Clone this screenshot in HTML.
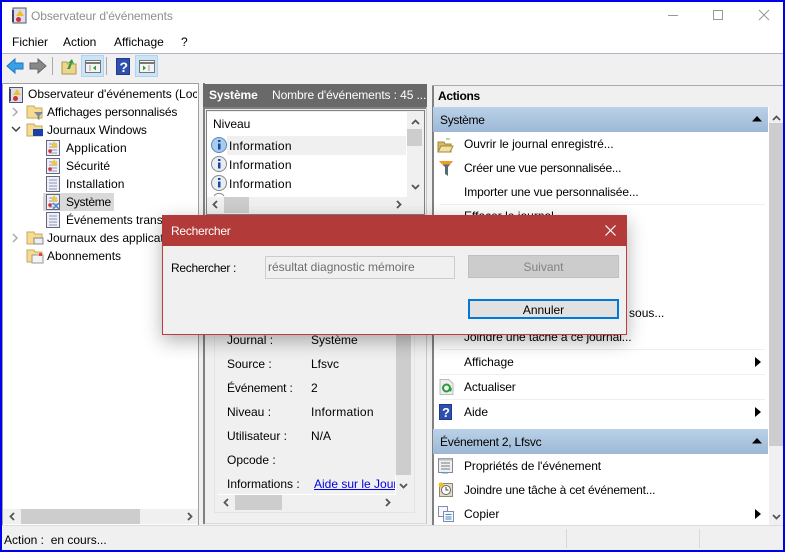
<!DOCTYPE html>
<html><head><meta charset="utf-8"><style>
html,body{margin:0;padding:0}
body{width:785px;height:552px;overflow:hidden;position:relative;background:#f0f0f0;font:12px/16px "Liberation Sans",sans-serif;color:#000}
.a,.t{position:absolute}
.t{white-space:nowrap}
svg{position:absolute;overflow:visible}
.sep{position:absolute;height:1px;background:#eee;left:440px;width:325px}
.band{position:absolute;left:433px;width:335px;height:25px;background:linear-gradient(#bad2e8,#9db8d6)}
</style></head><body>
<div class="a" style="left:0;top:0;width:781px;height:548px;border:2px solid #0000f0;background:#fff"></div>
<div class="a" style="left:2px;top:54px;width:781px;height:496px;background:#f0f0f0"></div>
<div class="a" style="left:2px;top:53px;width:781px;height:1px;background:#b4b4c4"></div>
<div class="a" style="left:2px;top:2px;width:781px;height:51px;background:#fff"></div>

<!-- Title -->
<svg style="left:11px;top:7px" width="18" height="18"><rect x="2" y="1" width="13" height="15" fill="#dde" stroke="#556"/><path d="M2 3v12" stroke="#446" stroke-width="2"/><path d="M9 3l4 6H5z" fill="#ecc02c"/><circle cx="7.500" cy="12.500" r="2.500" fill="#c33"/></svg>
<div class="t" style="left:31px;top:8px;color:#8f8f8f;font-size:12px;letter-spacing:-.08px">Observateur d'événements</div>
<div class="a" style="left:668px;top:15px;width:10px;height:1px;background:#999"></div>
<div class="a" style="left:713px;top:10px;width:8px;height:8px;border:1px solid #999"></div>
<svg style="left:759px;top:10px" width="10" height="10"><path d="M0 0l10 10M10 0L0 10" stroke="#999" fill="none"/></svg>

<!-- Menu -->
<div class="t" style="left:12px;top:34px">Fichier</div>
<div class="t" style="left:63px;top:34px">Action</div>
<div class="t" style="left:114px;top:34px">Affichage</div>
<div class="t" style="left:181px;top:34px">?</div>

<!-- Toolbar -->
<svg style="left:7px;top:59px" width="17" height="14"><path d="M0 7l8-7v4h8v6H8v4z" fill="#3aa0e8" stroke="#1878c0"/></svg>
<svg style="left:30px;top:59px" width="17" height="14"><path d="M16 7L8 0v4H0v6h8v4z" fill="#888" stroke="#666"/></svg>
<div class="a" style="left:52px;top:57px;width:1px;height:18px;background:#aaa"></div>
<svg style="left:61px;top:58px" width="16" height="17"><path d="M1 4h5l1 2h8v10H1z" fill="#ecd58e" stroke="#b09848"/><path d="M6 11l3-6-2 0 4-4 2 5-2-1-2 6z" fill="#3a9a3a"/></svg>
<div class="a" style="left:81px;top:55px;width:21px;height:20px;background:#cce4f7;border:1px solid #b0d4ee"></div>
<svg style="left:85px;top:60px" width="16" height="13"><rect x=".5" y=".5" width="15" height="12" fill="#f4f4f4" stroke="#777"/><path d="M1 3h14" stroke="#777" stroke-width="2"/><path d="M5 5v6" stroke="#999"/><path d="M11 5.500v5l-3-2.500z" fill="#2aa02a"/></svg>
<div class="a" style="left:106px;top:57px;width:1px;height:18px;background:#aaa"></div>
<svg style="left:116px;top:58px" width="14" height="17"><rect x=".5" y=".5" width="13" height="16" fill="#2f4fb0" stroke="#223a88"/><text x="3.500" y="14" font-family="Liberation Sans" font-size="14" font-weight="bold" fill="#fff">?</text></svg>
<div class="a" style="left:135px;top:55px;width:21px;height:20px;background:#cce4f7;border:1px solid #b0d4ee"></div>
<svg style="left:139px;top:60px" width="16" height="13"><rect x=".5" y=".5" width="15" height="12" fill="#f4f4f4" stroke="#777"/><path d="M1 3h14" stroke="#777" stroke-width="2"/><path d="M10 5v6" stroke="#999"/><path d="M4 5.500v5l3-2.500z" fill="#2aa02a"/></svg>

<!-- Left pane -->
<div class="a" style="left:2px;top:83px;width:195px;height:441px;background:#fff;border:1px solid #a0a0a0"></div>
<svg style="left:8px;top:87px" width="16" height="17"><rect x="1.500" y=".5" width="13" height="15" fill="#dde" stroke="#556"/><path d="M2 2v12" stroke="#446" stroke-width="2"/><path d="M9 2l4 6H5z" fill="#ecc02c"/><circle cx="7.500" cy="11.500" r="2.500" fill="#c33"/></svg>
<div class="t" style="left:28px;top:86px;overflow:hidden;width:169px">Observateur d'événements (Local)</div>

<svg style="left:12px;top:107px" width="8" height="10"><path d="M1 1l4 4-4 4" fill="none" stroke="#aaa" stroke-width="1.500"/></svg>
<svg style="left:26px;top:103px" width="18" height="17"><path d="M1 3h7l1 2h7v10H1z" fill="#f5dc92" stroke="#c8a858"/><path d="M8 9h9l-3.500 4v4l-2-1v-3z" fill="#7a8a98"/></svg>
<div class="t" style="left:47px;top:104px;letter-spacing:-.12px">Affichages personnalisés</div>

<svg style="left:11px;top:126px" width="10" height="8"><path d="M1 1l4 4 4-4" fill="none" stroke="#444" stroke-width="1.500"/></svg>
<svg style="left:26px;top:121px" width="18" height="17"><path d="M1 3h7l1 2h7v10H1z" fill="#f5dc92" stroke="#c8a858"/><rect x="7" y="8" width="10" height="7" fill="#1840a8"/></svg>
<div class="t" style="left:47px;top:122px;letter-spacing:-.1px">Journaux Windows</div>

<svg style="left:45px;top:140px" width="16" height="17"><rect x="1.500" y=".5" width="13" height="15" fill="#eef" stroke="#667"/><path d="M4 4h8M4 7h8M4 10h8M4 13h8" stroke="#99a"/><path d="M9 1l4 6H6z" fill="#f0cc30"/><circle cx="5" cy="11" r="1.800" fill="#c33"/></svg>
<div class="t" style="left:66px;top:140px;letter-spacing:.2px">Application</div>
<svg style="left:45px;top:158px" width="16" height="17"><rect x="1.500" y=".5" width="13" height="15" fill="#eef" stroke="#667"/><path d="M4 4h8M4 7h8M4 10h8M4 13h8" stroke="#99a"/><path d="M9 1l4 6H6z" fill="#f0cc30"/><circle cx="5" cy="11" r="1.800" fill="#c33"/></svg>
<div class="t" style="left:66px;top:158px">Sécurité</div>
<svg style="left:45px;top:176px" width="16" height="17"><rect x="1.500" y=".5" width="13" height="15" fill="#eef" stroke="#667"/><path d="M4 4h8M4 7h8M4 10h8M4 13h8" stroke="#89a"/></svg>
<div class="t" style="left:66px;top:176px;letter-spacing:.1px">Installation</div>
<div class="a" style="left:43px;top:193px;width:71px;height:18px;background:#d9d9d9"></div>
<svg style="left:45px;top:194px" width="16" height="17"><rect x="1.500" y=".5" width="13" height="15" fill="#eef" stroke="#667"/><path d="M4 4h8M4 7h8M4 10h8M4 13h8" stroke="#99a"/><path d="M9 1l4 6H6z" fill="#f0cc30"/><circle cx="5" cy="11" r="1.800" fill="#c33"/><path d="M8 9l6 6M14 9l-6 6" stroke="#4a8ad0" stroke-width="1.500"/></svg>
<div class="t" style="left:66px;top:194px;letter-spacing:-.25px">Système</div>
<svg style="left:45px;top:212px" width="16" height="17"><rect x="1.500" y=".5" width="13" height="15" fill="#eef" stroke="#667"/><path d="M4 4h8M4 7h8M4 10h8M4 13h8" stroke="#89a"/></svg>
<div class="t" style="left:66px;top:212px">Événements transférés</div>

<svg style="left:12px;top:233px" width="8" height="10"><path d="M1 1l4 4-4 4" fill="none" stroke="#aaa" stroke-width="1.500"/></svg>
<svg style="left:26px;top:229px" width="18" height="17"><path d="M1 3h7l1 2h7v10H1z" fill="#f5dc92" stroke="#c8a858"/><rect x="8" y="9" width="9" height="6" fill="#eee" stroke="#888"/></svg>
<div class="t" style="left:47px;top:230px">Journaux des applications</div>
<svg style="left:26px;top:247px" width="18" height="17"><path d="M1 3h7l1 2h7v10H1z" fill="#f5dc92" stroke="#c8a858"/><rect x="6" y="8" width="11" height="8" fill="#f4f4f4" stroke="#999"/><rect x="13" y="6" width="3" height="3" fill="#d44"/></svg>
<div class="t" style="left:47px;top:248px">Abonnements</div>

<div class="a" style="left:3px;top:509px;width:195px;height:15px;background:#f0f0f0"></div>
<div class="a" style="left:21px;top:509px;width:119px;height:15px;background:#cdcdcd"></div>
<svg style="left:9px;top:512px" width="7" height="9"><path d="M5 1L1.500 4.500 5 8" fill="none" stroke="#555" stroke-width="1.800"/></svg>
<svg style="left:186px;top:512px" width="7" height="9"><path d="M2 1l3.500 3.500L2 8" fill="none" stroke="#555" stroke-width="1.800"/></svg>

<!-- Middle pane -->
<div class="a" style="left:203px;top:83px;width:224px;height:441px;background:#f0f0f0;border-left:2px solid #808080;box-sizing:border-box"></div>
<div class="a" style="left:203px;top:84px;width:224px;height:23px;background:#696969"></div>
<div class="t" style="left:209px;top:87px;color:#fff;font-weight:bold;letter-spacing:-.1px">Système</div>
<div class="t" style="left:272px;top:87px;color:#fff;letter-spacing:-.1px">Nombre d'événements : 45 ...</div>
<div class="a" style="left:203px;top:107px;width:224px;height:2px;background:#808080"></div>
<div class="a" style="left:206px;top:110px;width:217px;height:103px;border:1px solid #808080;background:#f0f0f0"></div>
<div class="a" style="left:207px;top:112px;width:216px;height:101px;background:#fff"></div>
<div class="t" style="left:213px;top:116px">Niveau</div>
<div class="a" style="left:227px;top:136px;width:179px;height:19px;background:#f0f0f0"></div>
<svg style="left:211px;top:136px" width="17" height="60">
<circle cx="8" cy="9" r="7.500" fill="#a8ccec" stroke="#5a88b8"/><rect x="7" y="7.500" width="2.500" height="6" fill="#1848a0"/><rect x="7" y="4" width="2.500" height="2" fill="#1848a0"/>
<circle cx="8" cy="28" r="7.500" fill="#e8eef4" stroke="#888"/><rect x="7" y="26.500" width="2.500" height="6" fill="#1848a0"/><rect x="7" y="23" width="2.500" height="2" fill="#1848a0"/>
<circle cx="8" cy="47" r="7.500" fill="#e8eef4" stroke="#888"/><rect x="7" y="45.500" width="2.500" height="6" fill="#1848a0"/><rect x="7" y="42" width="2.500" height="2" fill="#1848a0"/>
<path d="M3 60a6 6 0 0 1 10 0" fill="none" stroke="#888"/>
</svg>
<div class="t" style="left:229px;top:138px;letter-spacing:.25px">Information</div>
<div class="t" style="left:229px;top:157px;letter-spacing:.25px">Information</div>
<div class="t" style="left:229px;top:176px;letter-spacing:.25px">Information</div>
<div class="a" style="left:407px;top:112px;width:16px;height:85px;background:#f0f0f0"></div>
<div class="a" style="left:407px;top:129px;width:15px;height:17px;background:#cdcdcd"></div>
<svg style="left:411px;top:119px" width="9" height="6"><path d="M1 5l3.500-3.500L8 5" fill="none" stroke="#555" stroke-width="1.800"/></svg>
<svg style="left:411px;top:184px" width="9" height="6"><path d="M1 1l3.500 3.500L8 1" fill="none" stroke="#555" stroke-width="1.800"/></svg>
<div class="a" style="left:207px;top:197px;width:216px;height:16px;background:#f0f0f0"></div>
<div class="a" style="left:224px;top:197px;width:25px;height:16px;background:#cdcdcd"></div>
<svg style="left:212px;top:200px" width="7" height="9"><path d="M5 1L1.500 4.500 5 8" fill="none" stroke="#555" stroke-width="1.800"/></svg>
<svg style="left:395px;top:200px" width="7" height="9"><path d="M2 1l3.500 3.500L2 8" fill="none" stroke="#555" stroke-width="1.800"/></svg>

<!-- Lower middle -->
<div class="a" style="left:203px;top:330px;width:224px;height:194px;background:#f0f0f0"></div>
<div class="a" style="left:203px;top:330px;width:2px;height:194px;background:#808080"></div>
<div class="a" style="left:205px;top:523px;width:222px;height:1px;background:#dcdcdc"></div>
<div class="a" style="left:214px;top:330px;width:199px;height:182px;border:solid #e4e4e4;border-width:0 1px 1px 1px;background:#f0f0f0"></div>
<div class="t" style="left:227px;top:332px">Journal :</div><div class="t" style="left:311px;top:332px">Système</div>
<div class="t" style="left:227px;top:356px">Source :</div><div class="t" style="left:311px;top:356px">Lfsvc</div>
<div class="t" style="left:227px;top:380px;letter-spacing:-.15px">Événement :</div><div class="t" style="left:311px;top:380px">2</div>
<div class="t" style="left:227px;top:404px">Niveau :</div><div class="t" style="left:311px;top:404px;letter-spacing:.25px">Information</div>
<div class="t" style="left:227px;top:428px">Utilisateur :</div><div class="t" style="left:311px;top:428px">N/A</div>
<div class="t" style="left:227px;top:452px">Opcode :</div>
<div class="t" style="left:227px;top:476px">Informations :</div>
<div class="t" style="left:314px;top:476px;width:81px;overflow:hidden;color:#0000e0;text-decoration:underline">Aide sur le Journal</div>
<div class="a" style="left:396px;top:330px;width:15px;height:145px;background:#cdcdcd"></div>
<svg style="left:399px;top:483px" width="9" height="6"><path d="M1 1l3.500 3.500L8 1" fill="none" stroke="#555" stroke-width="1.800"/></svg>
<div class="a" style="left:218px;top:494px;width:177px;height:1px;background:#fff"></div>
<div class="a" style="left:395px;top:475px;width:1px;height:20px;background:#fff"></div>
<div class="a" style="left:235px;top:495px;width:47px;height:15px;background:#cdcdcd"></div>
<svg style="left:223px;top:498px" width="7" height="9"><path d="M5 1L1.500 4.500 5 8" fill="none" stroke="#555" stroke-width="1.800"/></svg>
<svg style="left:384px;top:498px" width="7" height="9"><path d="M2 1l3.500 3.500L2 8" fill="none" stroke="#555" stroke-width="1.800"/></svg>
<div class="a" style="left:426px;top:107px;width:1px;height:417px;background:#c8c8c8"></div>

<!-- Right pane -->
<div class="a" style="left:432px;top:85px;width:351px;height:440px;background:#fff;border-left:2px solid #808080;box-sizing:border-box"></div>
<div class="a" style="left:432px;top:85px;width:351px;height:1px;background:#aaa"></div>
<div class="a" style="left:434px;top:86px;width:349px;height:21px;background:#f0f0f0"></div>
<div class="t" style="left:438px;top:88px;font-weight:bold;letter-spacing:-.3px">Actions</div>
<div class="band" style="top:107px"></div>
<div class="t" style="left:440px;top:112px;letter-spacing:-.3px">Système</div>
<svg style="left:752px;top:115px" width="11" height="7"><path d="M0 6.500L5 1l5 5.500z" fill="#000"/></svg>

<svg style="left:437px;top:138px" width="17" height="15"><path d="M1 4h6l1 2h6v8H1z" fill="#d8b868" stroke="#a08838"/><path d="M1 14l3-6h12l-3 6z" fill="#f4e0a0" stroke="#a08838"/><path d="M9 1h4" stroke="#4c4"/></svg>
<div class="t" style="left:464px;top:136px;letter-spacing:-.06px">Ouvrir le journal enregistré...</div>
<svg style="left:439px;top:161px" width="15" height="15"><path d="M0 0h14L9 6v9l-3-2V6z" fill="#5a6a78"/><path d="M0 0h14l-3 3.500H3z" fill="#f0a020"/></svg>
<div class="t" style="left:464px;top:160px;letter-spacing:-.23px">Créer une vue personnalisée...</div>
<div class="t" style="left:464px;top:184px;letter-spacing:-.13px">Importer une vue personnalisée...</div>
<div class="sep" style="top:204px"></div>
<div class="t" style="left:464px;top:208px">Effacer le journal...</div>
<div class="t" style="left:603px;top:305px">tous sous...</div>
<div class="sep" style="top:349px"></div>
<div class="t" style="left:464px;top:329px;letter-spacing:-.1px">Joindre une tâche à ce journal...</div>
<div class="t" style="left:464px;top:354px">Affichage</div>
<svg style="left:755px;top:357px" width="7" height="10"><path d="M0 0l6 5-6 5z"/></svg>
<div class="sep" style="top:374px"></div>
<svg style="left:439px;top:379px" width="15" height="16"><path d="M1 .5h9l4 4v11H1z" fill="#eee" stroke="#bbb"/><circle cx="7.500" cy="9" r="3.500" fill="none" stroke="#2a9a3a" stroke-width="2"/><path d="M9 10l4-1-1 4z" fill="#2a9a3a"/></svg>
<div class="t" style="left:464px;top:379px;letter-spacing:-.1px">Actualiser</div>
<div class="sep" style="top:399px"></div>
<svg style="left:439px;top:404px" width="13" height="16"><rect x=".5" y=".5" width="12" height="15" fill="#2f4fb0" stroke="#223a88"/><text x="3" y="13" font-family="Liberation Sans" font-size="13" font-weight="bold" fill="#fff">?</text></svg>
<div class="t" style="left:464px;top:404px">Aide</div>
<svg style="left:755px;top:407px" width="7" height="10"><path d="M0 0l6 5-6 5z"/></svg>

<div class="band" style="top:429px"></div>
<div class="t" style="left:440px;top:434px;letter-spacing:-.22px">Événement 2, Lfsvc</div>
<svg style="left:752px;top:437px" width="11" height="7"><path d="M0 6.500L5 1l5 5.500z" fill="#000"/></svg>
<svg style="left:438px;top:458px" width="16" height="16"><rect x=".5" y=".5" width="14" height="14" fill="#f0f0f0" stroke="#889"/><path d="M1 1.500h13" stroke="#bbb" stroke-width="2"/><path d="M3 5h9M3 8h9M3 11h9" stroke="#778"/><path d="M4 15h6" stroke="#4ac"/></svg>
<div class="t" style="left:464px;top:458px;letter-spacing:-.08px">Propriétés de l'événement</div>
<svg style="left:438px;top:482px" width="16" height="16"><rect x="1.500" y="1.500" width="13" height="13" fill="#e4dcc8" stroke="#887"/><circle cx="8" cy="8" r="4.500" fill="#fff" stroke="#666"/><path d="M8 5v3h2.500" stroke="#444" fill="none"/><circle cx="3" cy="3" r="2.500" fill="#f0c020"/></svg>
<div class="t" style="left:464px;top:482px;letter-spacing:-.17px">Joindre une tâche à cet événement...</div>
<svg style="left:438px;top:506px" width="16" height="16"><rect x=".5" y=".5" width="9" height="10" fill="#f4f8fc" stroke="#88a"/><rect x="5.500" y="5.500" width="10" height="10" fill="#f4f8fc" stroke="#88a"/><path d="M7.500 8.500h6M7.500 11h6M7.500 13h6" stroke="#48c"/></svg>
<div class="t" style="left:464px;top:506px">Copier</div>
<svg style="left:755px;top:509px" width="7" height="10"><path d="M0 0l6 5-6 5z"/></svg>

<div class="a" style="left:769px;top:107px;width:14px;height:418px;background:#f0f0f0"></div>
<div class="a" style="left:769px;top:123px;width:14px;height:323px;background:#cdcdcd"></div>
<svg style="left:772px;top:115px" width="9" height="6"><path d="M1 5l3.500-3.500L8 5" fill="none" stroke="#555" stroke-width="1.800"/></svg>
<svg style="left:772px;top:514px" width="9" height="6"><path d="M1 1l3.500 3.500L8 1" fill="none" stroke="#555" stroke-width="1.800"/></svg>

<!-- Status bar -->
<div class="a" style="left:2px;top:525px;width:781px;height:1px;background:#dcdcdc"></div>
<div class="t" style="left:4px;top:532px">Action :&nbsp; en cours...</div>
<div class="a" style="left:566px;top:529px;width:1px;height:19px;background:#d8d8d8"></div>
<div class="a" style="left:699px;top:529px;width:1px;height:19px;background:#d8d8d8"></div>

<!-- Dialog -->
<div class="a" style="left:162px;top:215px;width:463px;height:118px;background:#f0f0f0;border:1px solid #c03c3c;box-shadow:0 6px 18px rgba(0,0,0,.3)"></div>
<div class="a" style="left:162px;top:215px;width:465px;height:31px;background:#b23a38"></div>
<div class="t" style="left:171px;top:223px;color:#fff;letter-spacing:-.25px">Rechercher</div>
<svg style="left:605px;top:225px" width="11" height="11"><path d="M.5.500l10 10M10.500.500l-10 10" stroke="#fff" stroke-width="1.200" fill="none"/></svg>
<div class="t" style="left:171px;top:260px;letter-spacing:-.3px">Rechercher :</div>
<div class="a" style="left:265px;top:256px;width:188px;height:21px;border:1px solid #ccc;background:#f0f0f0"></div>
<div class="t" style="left:268px;top:259px;color:#6d6d6d">résultat diagnostic mémoire</div>
<div class="a" style="left:468px;top:255px;width:149px;height:21px;background:#ccc;border:1px solid #bfbfbf"></div>
<div class="t" style="left:468px;top:259px;width:151px;text-align:center;color:#838383">Suivant</div>
<div class="a" style="left:468px;top:299px;width:147px;height:16px;background:#e1e1e1;border:2px solid #0078d7"></div>
<div class="t" style="left:468px;top:302px;width:151px;text-align:center">Annuler</div>
</body></html>
